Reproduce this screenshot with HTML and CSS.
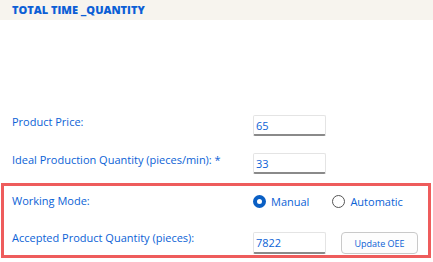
FILE: index.html
```html
<!DOCTYPE html>
<html>
<head>
<meta charset="utf-8">
<link rel="stylesheet" href="styles.css">
</head>
<body>
<div class="header">TOTAL TIME _QUANTITY</div>
<div class="form">
  <div class="row">
    <div class="label">Product Price:</div>
    <div class="control"><input class="field" type="text" value="65"></div>
  </div>
  <div class="row">
    <div class="label">Ideal Production Quantity (pieces/min): *</div>
    <div class="control"><input class="field" type="text" value="33"></div>
  </div>
  <div class="box">
    <div class="row radio-row">
      <div class="label inner">Working Mode:</div>
      <div class="control">
        <span class="opt"><span class="radio on"></span>Manual</span>
        <span class="opt"><span class="radio"></span>Automatic</span>
      </div>
    </div>
    <div class="row input-row">
      <div class="label inner">Accepted Product Quantity (pieces):</div>
      <div class="control">
        <input class="field" type="text" value="7822">
        <button class="btn">Update OEE</button>
      </div>
    </div>
  </div>
</div>
</body>
</html>
```
FILE: styles.css
```css
* { box-sizing: border-box; }
body {
  margin: 0;
  background: #fff;
  font-family: "Open Sans", "Noto Sans", sans-serif;
  color: #0b62d6;
  font-size: 11px;
}
.header {
  height: 20px;
  background: #f7f4ee;
  padding-left: 12px;
  font-weight: 800;
  font-size: 11px;
  line-height: 19px;
  color: #0c5fd6;
}
.form {
  padding-top: 95px;
  display: flex;
  flex-direction: column;
}
.row {
  display: flex;
  align-items: flex-start;
  height: 21px;
}
.form > .row + .row { margin-top: 17px; }
.label {
  width: 253px;
  padding-left: 12px;
  flex-shrink: 0;
  line-height: 14px;
}
.label.inner { width: 249px; padding-left: 8px; }
.control {
  display: flex;
  align-items: center;
}
.field {
  width: 73px;
  height: 21px;
  border: 1px solid #e4e4e4;
  border-bottom: 2px solid #8a8a8a;
  border-radius: 2px;
  padding: 0 0 0 2px;
  font-family: inherit;
  font-size: 11px;
  color: #0b62d6;
  background: #fff;
  outline: none;
}
.box {
  margin: 9px 2px 0 1px;
  border: 3px solid #ee5c5c;
  padding: 6px 0 1px;
  display: flex;
  flex-direction: column;
}
.radio-row { height: 18px; align-items: center; }
.input-row { height: 22px; margin-top: 22px; }
.input-row .field { height: 22px; }
.input-row .label { margin-top: -1px; }
.opt {
  display: flex;
  align-items: center;
  gap: 5px;
  margin-right: 23px;
  font-size: 11px;
}
.radio {
  width: 13px;
  height: 13px;
  border-radius: 50%;
  border: 1px solid #555;
  background: #fff;
  display: inline-block;
}
.radio.on {
  border: 4px solid #0a5fc4;
  background: #fff;
}
.btn {
  margin-left: 15px;
  width: 77px;
  height: 22px;
  border: 1px solid #c9c9c9;
  border-radius: 4px;
  background: #fdfdfd;
  font-family: inherit;
  font-size: 9px;
  color: #0b62d6;
  padding: 0;
}
```
